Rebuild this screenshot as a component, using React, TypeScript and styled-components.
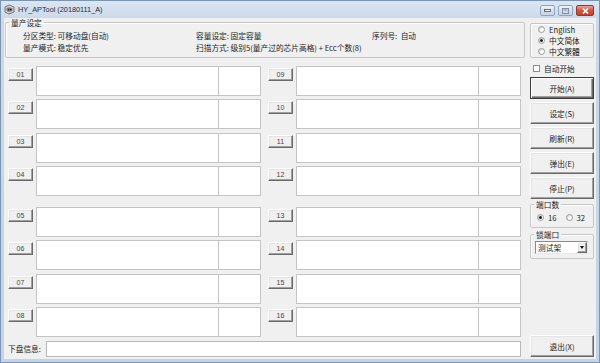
import React from "react";
import styled, { createGlobalStyle, css } from "styled-components";

const CJK = `"Noto Sans CJK SC", "Noto Sans", sans-serif`;
const LATIN = `"Liberation Sans", Arial, sans-serif`;

const GlobalStyle = createGlobalStyle`
  html, body { margin: 0; padding: 0; }
  body {
    width: 600px; height: 363px; overflow: hidden;
    background: #f0f0f0; font-family: ${CJK};
  }
  * { box-sizing: border-box; }
`;

const Window = styled.div`
  width: 600px;
  height: 363px;
  display: flex;
  flex-direction: column;
  background: linear-gradient(#dce6f2, #cad9eb 18px, #c2d4ea);
  border: 1px solid #7c95b3;
  padding: 0 3px 3px 3px;
`;

const TitleBar = styled.div`
  height: 17px;
  display: flex;
  align-items: center;
  gap: 3px;
`;

const TitleText = styled.span`
  font-family: ${LATIN};
  font-size: 7.3px;
  color: #1e2b3c;
  flex: 1;
`;

const CaptionGroup = styled.div`
  display: flex;
  gap: 3px;
  align-self: flex-start;
  margin-top: 4px;
  margin-right: 2px;
`;

const CaptionButton = styled.div<{ $close?: boolean; $w: number }>`
  width: ${(p) => p.$w}px;
  height: 11px;
  border: 1px solid ${(p) => (p.$close ? "#8d3a32" : "#8ea3bd")};
  border-radius: 2px;
  background: ${(p) =>
    p.$close
      ? "linear-gradient(#e9a396, #d0553f 50%, #c4412c)"
      : "linear-gradient(#eef3f9, #d5e0ee 50%, #c6d4e6)"};
  display: flex;
  align-items: center;
  justify-content: center;
`;

const Body = styled.div`
  flex: 1;
  background: #f0f0f0;
  display: grid;
  grid-template-columns: 520px 64px;
  column-gap: 5px;
  padding: 0 2px 2px 1px;
  font-size: 7.7px;
  color: #1c1c1c;
`;

const LeftColumn = styled.div`
  display: flex;
  flex-direction: column;
`;

const RightColumn = styled.div`
  display: flex;
  flex-direction: column;
`;

const GroupBox = styled.fieldset<{ $top?: number }>`
  margin: ${(p) => p.$top ?? 0}px 0 0 0;
  padding: 0;
  min-width: 0;
  border: 1px solid #c6c6c6;
  border-radius: 2px;
  box-shadow: inset 1px 1px 0 #fff;
`;

const Legend = styled.legend`
  font-size: 7.7px;
  line-height: 9px;
  padding: 0 2px;
  margin-left: 3px;
  color: #1c1c1c;
`;

const SettingsGrid = styled.div`
  display: grid;
  grid-template-columns: 173px 176px 1fr;
  grid-auto-rows: 12px;
  align-items: center;
  padding: 2.5px 0 3.5px 17px;
  white-space: nowrap;
  line-height: 12px;
`;

const LangBox = styled.div`
  margin-top: 4.5px;
  height: 35.5px;
  border: 1px solid #c6c6c6;
  border-radius: 2px;
  box-shadow: inset 1px 1px 0 #fff;
  padding: 0.5px 0 0 7px;
  display: flex;
  flex-direction: column;
`;

const RadioRow = styled.label`
  display: flex;
  align-items: center;
  gap: 4px;
  height: 11.5px;
  white-space: nowrap;
`;

const RadioCircle = styled.span<{ $on?: boolean }>`
  width: 7px;
  height: 7px;
  border-radius: 50%;
  border: 1px solid #9a9a9a;
  background: #fff;
  box-shadow: inset 1px 1px 0 #d4d4d4;
  display: inline-flex;
  align-items: center;
  justify-content: center;
  flex: none;
  ${(p) =>
    p.$on &&
    css`
      &::after {
        content: "";
        width: 3px;
        height: 3px;
        border-radius: 50%;
        background: #1a1a1a;
      }
    `}
`;

const CheckRow = styled.label`
  margin-top: 5px;
  height: 11px;
  display: flex;
  align-items: center;
  gap: 4px;
  padding-left: 3px;
`;

const CheckBox = styled.span`
  width: 7px;
  height: 7px;
  border: 1px solid #8b8b8b;
  background: #fff;
  flex: none;
`;

const ButtonStack = styled.div`
  margin-top: 3px;
  display: flex;
  flex-direction: column;
  gap: 3px;
`;

const bevel = css`
  background: #f0f0f0;
  border: 1px solid;
  border-color: #fff #6a6a6a #6a6a6a #fff;
  box-shadow: inset -1px -1px 0 #a0a0a0, inset 1px 1px 0 #e4e4e4;
`;

const ActionButton = styled.div<{ $default?: boolean }>`
  height: 22px;
  display: flex;
  align-items: center;
  justify-content: center;
  font-size: 7.7px;
  color: #1c1c1c;
  ${bevel}
  ${(p) =>
    p.$default &&
    css`
      border-color: #3c3c3c;
      box-shadow: inset 1px 1px 0 #fff, inset -1px -1px 0 #6a6a6a,
        inset -2px -2px 0 #a0a0a0;
    `}
`;

const PortRadios = styled.div`
  display: flex;
  gap: 9px;
  padding: 3px 0 3px 6px;
`;

const SelectWrap = styled.div`
  padding: 2px 0 4px 4px;
`;

const Select = styled.div`
  width: 53px;
  height: 13px;
  background: #fff;
  border: 1px solid;
  border-color: #8a8a8a #e8e8e8 #e8e8e8 #8a8a8a;
  display: flex;
  align-items: center;
  justify-content: space-between;
  padding-left: 2px;
  font-size: 7.7px;
`;

const SelectArrow = styled.span`
  width: 10px;
  height: 11px;
  ${bevel}
  display: flex;
  align-items: center;
  justify-content: center;
  &::after {
    content: "";
    border-left: 2.5px solid transparent;
    border-right: 2.5px solid transparent;
    border-top: 3px solid #111;
  }
`;

const Spacer = styled.div`
  flex: 1;
`;

const PortArea = styled.div`
  margin-top: 7.5px;
  display: flex;
  flex-direction: column;
  gap: 10.5px;
`;

const PortSection = styled.div`
  display: grid;
  grid-template-columns: 253px 253px;
  grid-template-rows: repeat(4, 30px);
  grid-auto-flow: column;
  column-gap: 7px;
  row-gap: 3.5px;
  padding-left: 3px;
`;

const PortRow = styled.div`
  display: flex;
  align-items: flex-start;
  gap: 3px;
`;

const PortButton = styled.div`
  width: 25px;
  height: 13px;
  margin-top: 2px;
  flex: none;
  display: flex;
  align-items: center;
  justify-content: center;
  font-family: ${LATIN};
  font-size: 7px;
  color: #444;
  ${bevel}
`;

const PortBox = styled.div`
  flex: 1;
  height: 30px;
  background: #fff;
  border: 1px solid #c4c4c4;
  display: grid;
  grid-template-columns: 1fr 42px;
`;

const PortCell = styled.div`
  border-left: 1px solid #c4c4c4;
`;

const InfoRow = styled.div`
  margin-top: 3.5px;
  height: 16px;
  display: flex;
  align-items: center;
  gap: 5px;
  padding: 0 4px 0 3px;
`;

const InfoInput = styled.div`
  flex: 1;
  height: 16px;
  background: #fff;
  border: 1px solid #b9b9b9;
`;

const AppIcon = () => (
  <svg width="11" height="11" viewBox="0 0 11 11">
    <path d="M1 3 L5 1 L10 3 L10 8 L5 10 L1 8 Z" fill="#d8d8d8" stroke="#555" strokeWidth="0.8" />
    <path d="M2.5 4 L5 3 L8.5 4.2 L8.5 7 L5 8.3 L2.5 7 Z" fill="#8a8a8a" />
    <rect x="3.7" y="4.8" width="1.6" height="1.6" fill="#222" />
    <rect x="6" y="4.8" width="1.6" height="1.6" fill="#222" />
  </svg>
);

const leftPorts = ["01", "02", "03", "04"];
const rightPorts = ["09", "10", "11", "12"];
const leftPorts2 = ["05", "06", "07", "08"];
const rightPorts2 = ["13", "14", "15", "16"];

const Port = ({ n }: { n: string }) => (
  <PortRow>
    <PortButton>{n}</PortButton>
    <PortBox>
      <div />
      <PortCell />
    </PortBox>
  </PortRow>
);

export default function App() {
  return (
    <>
      <GlobalStyle />
      <Window>
        <TitleBar>
          <AppIcon />
          <TitleText>HY_APTool (20180111_A)</TitleText>
          <CaptionGroup>
            <CaptionButton $w={15}>
              <svg width="7" height="3" viewBox="0 0 7 3">
                <rect x="0.5" y="0.5" width="6" height="2" fill="#fff" stroke="#44546a" strokeWidth="0.8" />
              </svg>
            </CaptionButton>
            <CaptionButton $w={15}>
              <svg width="7" height="6" viewBox="0 0 7 6">
                <rect x="0.5" y="0.5" width="6" height="5" fill="none" stroke="#7e8fa6" strokeWidth="1" />
                <rect x="1.5" y="1.5" width="4" height="1" fill="#7e8fa6" />
              </svg>
            </CaptionButton>
            <CaptionButton $close $w={18}>
              <svg width="7" height="6" viewBox="0 0 7 6">
                <path d="M1 0.5 L6 5.5 M6 0.5 L1 5.5" stroke="#fff" strokeWidth="1.6" />
              </svg>
            </CaptionButton>
          </CaptionGroup>
        </TitleBar>
        <Body>
          <LeftColumn>
            <GroupBox>
              <Legend>量产设定</Legend>
              <SettingsGrid>
                <span>分区类型: 可移动盘(自动)</span>
                <span>容量设定: 固定容量</span>
                <span>序列号:&nbsp;&nbsp;自动</span>
                <span>量产模式: 稳定优先</span>
                <span>扫描方式: 级别5(量产过的芯片高格) + Ecc个数(8)</span>
              </SettingsGrid>
            </GroupBox>
            <PortArea>
              <PortSection>
                {[...leftPorts, ...rightPorts].map((n) => (
                  <Port key={n} n={n} />
                ))}
              </PortSection>
              <PortSection>
                {[...leftPorts2, ...rightPorts2].map((n) => (
                  <Port key={n} n={n} />
                ))}
              </PortSection>
            </PortArea>
            <InfoRow>
              <span>下盘信息:</span>
              <InfoInput />
            </InfoRow>
          </LeftColumn>
          <RightColumn>
            <LangBox>
              <RadioRow>
                <RadioCircle />
                English
              </RadioRow>
              <RadioRow>
                <RadioCircle $on />
                中文简体
              </RadioRow>
              <RadioRow>
                <RadioCircle />
                中文繁體
              </RadioRow>
            </LangBox>
            <CheckRow>
              <CheckBox />
              自动开始
            </CheckRow>
            <ButtonStack>
              <ActionButton $default>开始(A)</ActionButton>
              <ActionButton>设定(S)</ActionButton>
              <ActionButton>刷新(R)</ActionButton>
              <ActionButton>弹出(E)</ActionButton>
              <ActionButton>停止(P)</ActionButton>
            </ButtonStack>
            <GroupBox $top={1}>
              <Legend>端口数</Legend>
              <PortRadios>
                <RadioRow>
                  <RadioCircle $on />
                  16
                </RadioRow>
                <RadioRow>
                  <RadioCircle />
                  32
                </RadioRow>
              </PortRadios>
            </GroupBox>
            <GroupBox $top={2}>
              <Legend>锁端口</Legend>
              <SelectWrap>
                <Select>
                  测试架
                  <SelectArrow />
                </Select>
              </SelectWrap>
            </GroupBox>
            <Spacer />
            <ActionButton>退出(X)</ActionButton>
          </RightColumn>
        </Body>
      </Window>
    </>
  );
}
